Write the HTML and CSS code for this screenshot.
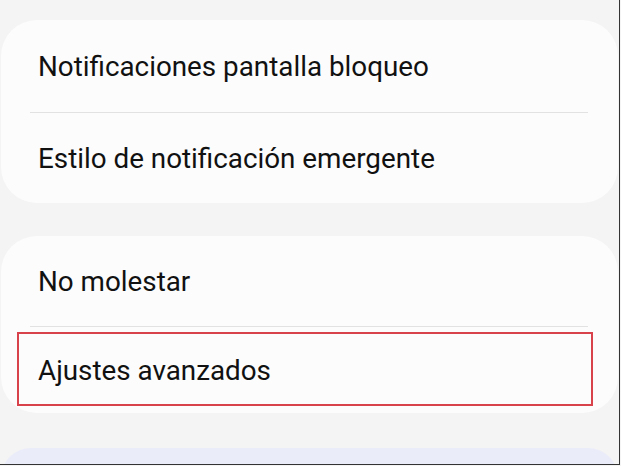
FILE: index.html
```html
<!DOCTYPE html>
<html lang="es">
<head>
<meta charset="utf-8">
<title>Notificaciones</title>
<link rel="stylesheet" href="styles.css">
</head>
<body>
<div class="screen">
  <section class="card card-first">
    <div class="row row-a">Notificaciones pantalla bloqueo</div>
    <div class="sep"></div>
    <div class="row row-b">Estilo de notificación emergente</div>
  </section>
  <section class="card card-second">
    <div class="row row-c">No molestar</div>
    <div class="sep"></div>
    <div class="row row-d">Ajustes avanzados<span class="highlight"></span></div>
  </section>
  <section class="card card-third"></section>
</div>
</body>
</html>
```

FILE: styles.css
```css
html, body {
  margin: 0;
  padding: 0;
}
body {
  background: #f4f4f4;
  font-family: Roboto, "Noto Sans", sans-serif;
  color: #111111;
  overflow: hidden;
}
.screen {
  width: 620px;
  height: 465px;
  border-right: 1px solid #333;
  border-bottom: 1px solid #333;
  padding-top: 20px;
  box-sizing: border-box;
  display: flex;
  flex-direction: column;
  gap: 33px;
  overflow: hidden;
  background: #f4f4f4;
}
.card {
  background: #fcfcfc;
  border-radius: 36px;
  margin: 0 1px;
  display: flex;
  flex-direction: column;
  flex-shrink: 0;
}
.card-first {
  height: 183px;
}
.card-second {
  height: 177px;
}
.card-third {
  margin-top: 2px;
  height: 60px;
  background: #eaecf9;
}
.row {
  position: relative;
  display: flex;
  align-items: center;
  padding-left: 37px;
  font-size: 27.8px;
}
.row-a { height: 92px; }
.row-b { height: 90px; }
.row-c { height: 90px; }
.row-d { height: 86px; }
.sep {
  height: 1px;
  background: #e2e2e2;
  margin: 0 30px 0 29px;
}
.highlight {
  position: absolute;
  left: 16px;
  top: 5px;
  width: 576px;
  height: 74px;
  border: 2px solid #d8434b;
  box-sizing: border-box;
}
```
